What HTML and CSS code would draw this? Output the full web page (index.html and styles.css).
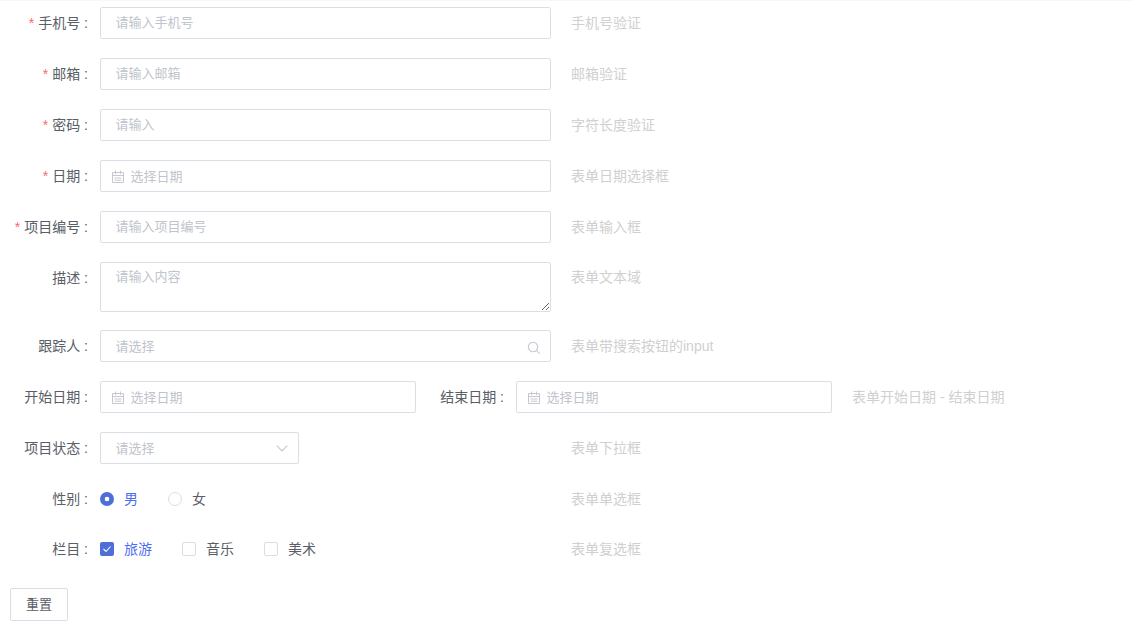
FILE: index.html
```html
<!DOCTYPE html>
<html lang="zh">
<head>
<meta charset="utf-8">
<title>表单</title>
<link rel="stylesheet" href="styles.css">
</head>
<body>
<svg class="sprite" width="0" height="0" aria-hidden="true">
  <symbol id="cal" viewBox="0 0 14 14"><path d="M1.5 2.5h11v10h-11zM1.5 5.5h11M4.5 .5v3.5M9.5 .5v3.5M3.5 8h7M3.5 10.2h7" fill="none" stroke="currentColor" stroke-width="1"/></symbol>
</svg>
<form class="form">
  <div class="row">
    <label class="label"><span class="req">*</span>手机号 :</label>
    <div class="control wide"><input class="input" placeholder="请输入手机号"></div>
    <span class="hint">手机号验证</span>
  </div>
  <div class="row">
    <label class="label"><span class="req">*</span>邮箱 :</label>
    <div class="control wide"><input class="input" placeholder="请输入邮箱"></div>
    <span class="hint">邮箱验证</span>
  </div>
  <div class="row">
    <label class="label"><span class="req">*</span>密码 :</label>
    <div class="control wide"><input class="input" placeholder="请输入"></div>
    <span class="hint">字符长度验证</span>
  </div>
  <div class="row">
    <label class="label"><span class="req">*</span>日期 :</label>
    <div class="control wide date"><svg class="cal"><use href="#cal"/></svg><span class="ph">选择日期</span></div>
    <span class="hint">表单日期选择框</span>
  </div>
  <div class="row">
    <label class="label"><span class="req">*</span>项目编号 :</label>
    <div class="control wide"><input class="input" placeholder="请输入项目编号"></div>
    <span class="hint">表单输入框</span>
  </div>
  <div class="row row-area">
    <label class="label">描述 :</label>
    <div class="control wide area"><textarea class="textarea" placeholder="请输入内容"></textarea></div>
    <span class="hint">表单文本域</span>
  </div>
  <div class="row">
    <label class="label">跟踪人 :</label>
    <div class="control wide search">
      <span class="ph">请选择</span>
      <svg class="icon-search" viewBox="0 0 14 14"><circle cx="6" cy="6" r="4.7" fill="none" stroke="currentColor" stroke-width="1.1"/><path d="M9.4 9.4l3.2 3.2" fill="none" stroke="currentColor" stroke-width="1.1"/></svg>
    </div>
    <span class="hint">表单带搜索按钮的input</span>
  </div>
  <div class="row">
    <label class="label">开始日期 :</label>
    <div class="control half date"><svg class="cal"><use href="#cal"/></svg><span class="ph">选择日期</span></div>
    <label class="label label-end">结束日期 :</label>
    <div class="control half date"><svg class="cal"><use href="#cal"/></svg><span class="ph">选择日期</span></div>
    <span class="hint">表单开始日期 - 结束日期</span>
  </div>
  <div class="row">
    <label class="label">项目状态 :</label>
    <div class="control narrow select">
      <span class="ph">请选择</span>
      <svg class="icon-arrow" viewBox="0 0 12 7"><path d="M.7 .7l5.3 5.3 5.3-5.3" fill="none" stroke="currentColor" stroke-width="1.1"/></svg>
    </div>
    <span class="hint hint-gap">表单下拉框</span>
  </div>
  <div class="row row-radio">
    <label class="label">性别 :</label>
    <div class="options radios">
      <span class="opt on"><i class="radio radio-on"></i><span class="opt-text">男</span></span>
      <span class="opt"><i class="radio"></i><span class="opt-text">女</span></span>
    </div>
    <span class="hint">表单单选框</span>
  </div>
  <div class="row row-check">
    <label class="label">栏目 :</label>
    <div class="options checks">
      <span class="opt on"><i class="check check-on"><svg viewBox="0 0 14 14"><path d="M3.5 7l2.5 2.5 4.5-5" fill="none" stroke="#fff" stroke-width="1.1"/></svg></i><span class="opt-text">旅游</span></span>
      <span class="opt"><i class="check"></i><span class="opt-text">音乐</span></span>
      <span class="opt"><i class="check"></i><span class="opt-text">美术</span></span>
    </div>
    <span class="hint">表单复选框</span>
  </div>
  <button class="btn" type="button">重置</button>
</form>
</body>
</html>
```
FILE: styles.css
```css
html, body { margin: 0; padding: 0; background: #fff; }
body {
  width: 1133px;
  height: 637px;
  overflow: hidden;
  font-family: "Liberation Sans", "Noto Sans CJK SC", sans-serif;
  font-size: 14px;
  color: #5a5e66;
}
.sprite { position: absolute; }
.form { padding: 6px 0 0 0; border-top: 1px solid #f8f8f8; }
.row {
  display: flex;
  align-items: center;
  height: 32px;
  margin-bottom: 19px;
}
.label {
  flex: none;
  width: 88px;
  height: 32px;
  margin-right: 12px;
  text-align: right;
  color: #5a5e66;
  line-height: 32px;
  white-space: nowrap;
}
.req { color: #f56c6c; margin-right: 4px; }
.control {
  flex: none;
  box-sizing: border-box;
  height: 32px;
  border: 1px solid #dcdee6;
  border-radius: 2px;
  background: #fff;
  display: flex;
  align-items: center;
  position: relative;
}
.wide { width: 451px; }
.half { width: 316px; }
.narrow { width: 199px; }
.input {
  width: 100%;
  height: 100%;
  box-sizing: border-box;
  border: 0;
  outline: 0;
  padding: 0 15px 2px 14.5px;
  background: transparent;
  font: inherit;
  font-size: 13px;
}
.input::placeholder, .textarea::placeholder { color: #c0c4cc; opacity: 1; }
.ph { color: #c0c4cc; font-size: 13px; padding-bottom: 2px; }
.search .ph, .select .ph { padding-left: 14.5px; }
.date { padding-left: 10px; }
.date .ph { margin-left: 5.5px; }
.cal { width: 14px; height: 14px; color: #c5c8d0; margin-top: 1px; flex: none; }
.hint { margin-left: 20px; padding-bottom: 2px; color: #d0d0d0; white-space: nowrap; }
.hint-gap { margin-left: 272px; }
.row-area { height: 50px; align-items: flex-start; margin-bottom: 18px; }
.row-area .hint { line-height: 30px; }
.area { height: 50px; }
.textarea {
  display: block;
  width: 100%;
  height: 100%;
  box-sizing: border-box;
  border: 0;
  outline: 0;
  padding: 3px 15px 3px 14.5px;
  background: transparent;
  font: inherit;
  font-size: 13px;
  line-height: 22px;
}
.icon-search { width: 14px; height: 14px; color: #c5c8d0; position: absolute; right: 9px; top: 10px; }
.icon-arrow { width: 12px; height: 7px; color: #c5c8d0; position: absolute; right: 10px; top: 12px; }
.options { flex: none; width: 451px; display: flex; align-items: center; }
.opt { display: flex; align-items: center; white-space: nowrap; }
.opt-text { padding-bottom: 2px; }
.on { color: #4e6ef2; }
.radios .opt { margin-right: 30px; }
.checks .opt { margin-right: 30px; }
.radio {
  box-sizing: border-box;
  width: 14px;
  height: 14px;
  border: 1px solid #dcdee6;
  border-radius: 50%;
  margin-right: 10px;
  flex: none;
}
.radio-on {
  border: 0;
  background: radial-gradient(circle, #fff 0, #fff 2px, #4e6fd8 2.6px);
}
.check {
  box-sizing: border-box;
  width: 14px;
  height: 14px;
  border: 1px solid #dcdee6;
  border-radius: 2px;
  margin-right: 10px;
  flex: none;
  display: block;
}
.check-on { border: 0; background: #4e6fd8; }
.check-on svg { display: block; width: 14px; height: 14px; }
.row-radio { margin-bottom: 18px; }
.row-check { margin-bottom: 23px; }
.btn {
  display: block;
  margin-left: 10px;
  width: 58px;
  height: 33px;
  box-sizing: border-box;
  border: 1px solid #dcdee6;
  border-radius: 2px;
  background: #fff;
  color: #5a5e66;
  font: inherit;
  font-size: 13px;
  padding: 0 0 2px;
}
```
